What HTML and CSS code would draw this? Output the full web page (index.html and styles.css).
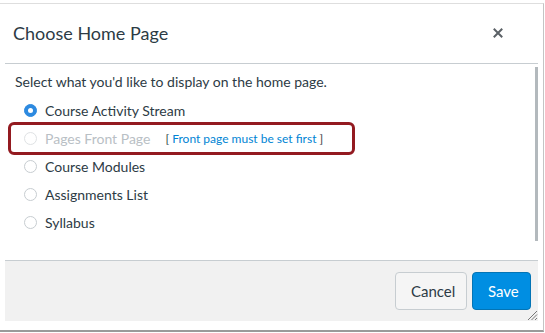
FILE: index.html
```html
<!DOCTYPE html>
<html>
<head>
<meta charset="utf-8">
<link rel="stylesheet" href="styles.css">
</head>
<body>
<div class="frame">
  <div class="dialog">
    <div class="header">
      <h1 class="title">Choose Home Page</h1>
      <button class="close" aria-label="Close">
        <svg width="10" height="10" viewBox="0 0 10 10"><path d="M1.5 1.5 L8.5 8.5 M8.5 1.5 L1.5 8.5" stroke="#5b6166" stroke-width="2" stroke-linecap="square"/></svg>
      </button>
    </div>
    <div class="body">
      <p class="intro">Select what you'd like to display on the home page.</p>
      <ul class="options">
        <li class="option"><span class="radio checked"></span><span class="label">Course Activity Stream</span></li>
        <li class="option disabled"><span class="radio"></span><span class="label">Pages Front Page</span><span class="tip">[ <span class="tip-link">Front page must be set first</span> ]</span><span class="highlight"></span></li>
        <li class="option"><span class="radio"></span><span class="label">Course Modules</span></li>
        <li class="option"><span class="radio"></span><span class="label">Assignments List</span></li>
        <li class="option"><span class="radio"></span><span class="label">Syllabus</span></li>
      </ul>
      <span class="scrollbar"></span>
    </div>
    <div class="footer">
      <button class="btn btn-cancel">Cancel</button>
      <button class="btn btn-save">Save</button>
      <svg class="grip" width="11" height="11" viewBox="0 0 11 11"><path d="M10 1 L1 10 M10 4.5 L4.5 10 M10 8 L8 10" stroke="#777" stroke-width="1"/></svg>
    </div>
  </div>
</div>
</body>
</html>
```

FILE: styles.css
```css
* { box-sizing: border-box; }
html, body { margin: 0; padding: 0; background: #fff; }
body { font-family: Lato, "Open Sans", "Liberation Sans", sans-serif; color: #2d3b45; }

.frame {
  margin-top: 3px;
  width: 544px;
  height: 329px;
  border-top: 1px solid #dedede;
  border-right: 1px solid #c4c4c4;
  border-bottom: 2px solid #9a9a9a;
  padding-bottom: 9px;
}
.dialog {
  margin-left: 5px;
  width: 533px;
  height: 100%;
  display: flex;
  flex-direction: column;
}
.header {
  height: 60px;
  display: flex;
  align-items: center;
  justify-content: space-between;
  padding: 0 35px 2px 8px;
  border-bottom: 1px solid #c7cdd1;
}
.title {
  margin: 0;
  font-size: 18px;
  font-weight: 400;
  color: #2d3b45;
}
.close {
  border: 0;
  background: none;
  padding: 0;
  display: flex;
  width: 10px;
  height: 10px;
}
.body {
  position: relative;
  flex: 1;
  padding: 8px 0 0 10px;
}
.intro {
  margin: 0;
  font-size: 14px;
  line-height: 20px;
}
.options {
  list-style: none;
  margin: 4px 0 0 0;
  padding: 0 0 0 9px;
}
.option {
  position: relative;
  height: 28px;
  display: flex;
  align-items: center;
  font-size: 14px;
}
.radio {
  width: 13px;
  height: 13px;
  border-radius: 50%;
  border: 1px solid #c7cdd1;
  background: #fff;
  margin-right: 8px;
  flex: none;
  display: flex;
  align-items: center;
  justify-content: center;
}
.radio.checked {
  background: #2d8ae0;
  border-color: #2d8ae0;
}
.radio.checked::after {
  content: "";
  width: 5px;
  height: 5px;
  border-radius: 50%;
  background: #fff;
}
.disabled .radio { border-color: #dfe2e4; }
.disabled .label { color: #b9c0c5; }
.tip {
  margin-left: 15px;
  font-size: 12px;
  color: #2d3b45;
}
.tip-link { color: #0084d4; }
.highlight {
  position: absolute;
  left: -16px;
  top: -2px;
  width: 347px;
  height: 33px;
  border: 3px solid #931a20;
  border-radius: 6px;
}
.scrollbar {
  position: absolute;
  right: 0;
  top: 3px;
  width: 3px;
  height: 174px;
  background: #b3b9bd;
}
.footer {
  position: relative;
  height: 61px;
  background: #f1f1f1;
  border-top: 1px solid #c7cdd1;
  display: flex;
  align-items: center;
  justify-content: flex-end;
  gap: 5px;
  padding: 0 7px 1px 0;
}
.btn {
  height: 38px;
  border-radius: 4px;
  font-family: Lato, "Open Sans", "Liberation Sans", sans-serif;
  font-size: 15px;
  padding: 0 15px;
}
.btn-cancel {
  width: 72px;
  background: #f5f5f5;
  border: 1px solid #c7cdd1;
  color: #2d3b45;
}
.btn-save {
  width: 59px;
  background: #008ee2;
  border: 1px solid #0374b5;
  color: #fff;
}
.grip {
  position: absolute;
  right: 0;
  bottom: 0;
}
```
